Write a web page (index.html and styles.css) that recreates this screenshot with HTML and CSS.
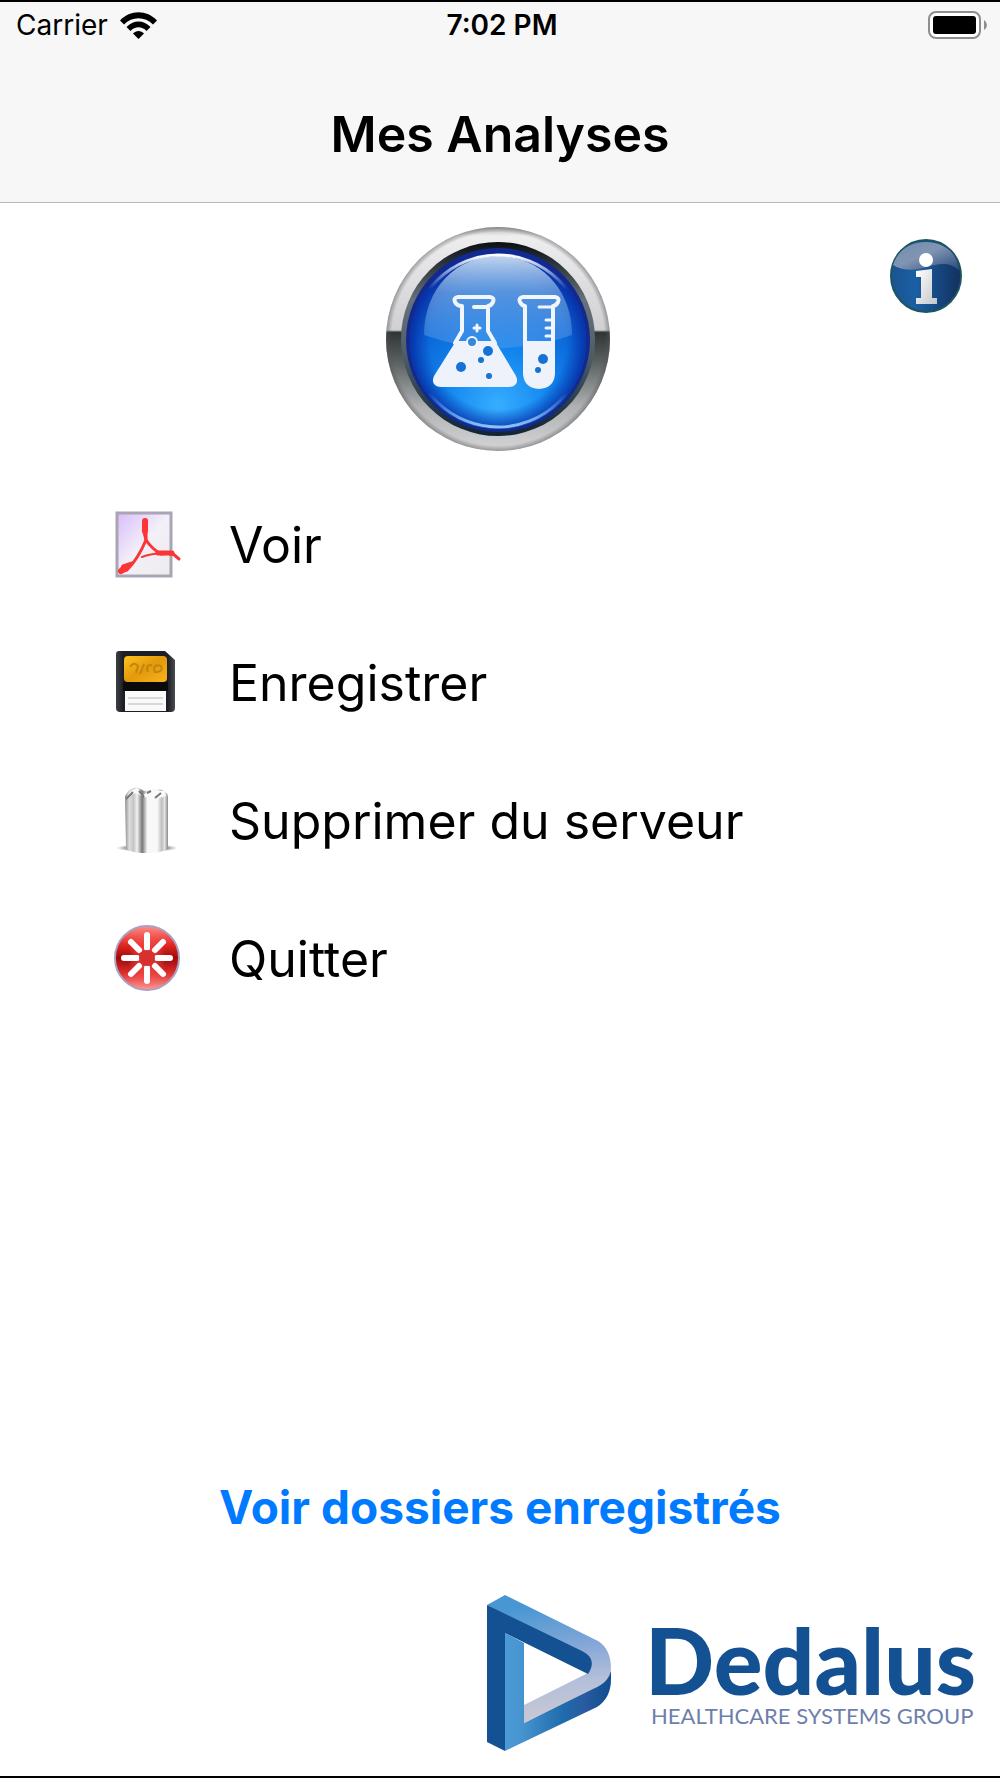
FILE: index.html
```html
<!DOCTYPE html>
<html lang="fr">
<head>
    <meta charset="UTF-8">
    <title>Mes Analyses</title>
    <meta name="viewport" content="width=device-width, initial-scale=1.0">
    <link rel="stylesheet" href="styles.css">
</head>
<body>

    <header class="header">
        <div class="status-bar">
            <div class="carrier">
                <span>Carrier</span>
                <svg class="wifi" viewBox="0 0 37 27" aria-hidden="true">
                    <path d="M0 8.5 C10 -2.5 27 -2.5 37 8.5 L33 12.5 C25 4 12 4 4 12.5 Z"/>
                    <path d="M6.5 15 C13 7.5 24 7.5 30.5 15 L26.5 19 C22 14 15 14 10.5 19 Z"/>
                    <path d="M13 21.5 C16 18 21 18 24 21.5 L18.5 27 Z"/>
                </svg>
            </div>
            <span class="time">7:02 PM</span>
            <svg class="battery" viewBox="0 0 60 28" aria-hidden="true">
                <rect x="1" y="1" width="51" height="26" rx="7" fill="#fff" stroke="#8e8e8e" stroke-width="2"/>
                <rect x="5" y="5" width="43" height="18" rx="3" fill="#000"/>
                <path d="M56 9 Q59 11 59 14 Q59 17 56 19 Z" fill="#8e8e8e"/>
            </svg>
        </div>
        <h1>Mes Analyses</h1>
    </header>

    <main class="content">
        <div class="hero">
            <svg class="lab-logo" viewBox="0 0 225 225" role="img" aria-label="Analyses">
                <defs>
                    <linearGradient id="ring" x1="0" y1="0" x2="0" y2="1">
                        <stop offset="0" stop-color="#b5b6b8"/>
                        <stop offset=".04" stop-color="#eeeeef"/>
                        <stop offset=".2" stop-color="#e2e2e5"/>
                        <stop offset=".46" stop-color="#d0d0d3"/>
                        <stop offset=".47" stop-color="#303435"/>
                        <stop offset=".6" stop-color="#596060"/>
                        <stop offset=".8" stop-color="#aeb0b2"/>
                        <stop offset="1" stop-color="#d5d5d8"/>
                    </linearGradient>
                    <linearGradient id="edge" x1="0" y1="0" x2="0" y2="1">
                        <stop offset="0" stop-color="#0a0f14"/>
                        <stop offset=".3" stop-color="#68737a"/>
                        <stop offset=".6" stop-color="#4a5c68"/>
                        <stop offset="1" stop-color="#102332"/>
                    </linearGradient>
                    <radialGradient id="ring-side" cx=".5" cy=".5" r=".5">
                        <stop offset=".95" stop-color="#555" stop-opacity="0"/>
                        <stop offset="1" stop-color="#555" stop-opacity=".5"/>
                    </radialGradient>
                    <radialGradient id="disc" cx=".5" cy=".86" r=".88">
                        <stop offset="0" stop-color="#36aeff"/>
                        <stop offset=".35" stop-color="#1285ee"/>
                        <stop offset=".65" stop-color="#0a64d6"/>
                        <stop offset="1" stop-color="#0c3fb0"/>
                    </radialGradient>
                    <radialGradient id="shade" cx=".5" cy=".5" r=".5">
                        <stop offset=".78" stop-color="#0630a8" stop-opacity="0"/>
                        <stop offset="1" stop-color="#0628a0" stop-opacity=".8"/>
                    </radialGradient>
                    <linearGradient id="gloss" x1="0" y1="0" x2="0" y2="1">
                        <stop offset="0" stop-color="#d5e8f7" stop-opacity=".9"/>
                        <stop offset=".4" stop-color="#94c0ec" stop-opacity=".55"/>
                        <stop offset="1" stop-color="#70aef0" stop-opacity=".3"/>
                    </linearGradient>
                    <linearGradient id="rim" x1="0" y1="0" x2="0" y2="1">
                        <stop offset="0" stop-color="#fff"/>
                        <stop offset=".2" stop-color="#fff" stop-opacity="0"/>
                        <stop offset=".8" stop-color="#9cd0ff" stop-opacity="0"/>
                        <stop offset="1" stop-color="#8cc4fa"/>
                    </linearGradient>
                </defs>
                <circle cx="112" cy="112" r="112" fill="url(#ring)"/>
                <circle cx="112" cy="112" r="112" fill="url(#ring-side)"/>
                <circle cx="112" cy="112" r="97" fill="url(#edge)"/>
                <circle cx="112" cy="113" r="92" fill="#12298f"/>
                <circle cx="112" cy="114" r="88" fill="url(#disc)"/>
                <circle cx="112" cy="114" r="88" fill="url(#shade)"/>
                <path d="M38 108 C38 62 70 29 112 29 C154 29 186 62 186 108 Q150 121 112 121 Q74 121 38 108 Z" fill="url(#gloss)"/>
                <circle cx="112" cy="114" r="86" fill="none" stroke="url(#rim)" stroke-width="3"/>

                <g fill="none" stroke="#f1f5fc" stroke-width="4" stroke-linecap="round" stroke-linejoin="round">
                    <path d="M72 70 H104 Q109 71 107 75 Q105 79 102 79 V104 L109 116 M72 70 Q67 71 69 75 Q71 79 76 79 V104 L69 116"/>
                    <path d="M88 80 H100"/>
                    <path d="M137 70 H169 Q174 71 172 75 Q170 79 167 79 V115 M137 70 Q132 71 134 75 Q136 79 139 79 V115"/>
                    <path d="M153 80 H166 M160 93 H166 M160 101 H166 M160 109 H166" stroke-width="3"/>
                    <path d="M91 98 V104 M88 101 H94" stroke-width="3"/>
                </g>
                <path d="M70 114 H109 L130 149 Q134 159 123 160 H55 Q44 159 48 149 Z" fill="#eef2fa"/>
                <path d="M137 114 H169 V147 Q168 161 153 162 Q138 161 137 147 Z" fill="#eef2fa"/>
                <circle cx="86" cy="115" r="5" fill="#3b86dd" stroke="#f1f5fc" stroke-width="2"/>
                <g fill="#1673d4">
                    <circle cx="102" cy="124" r="5"/>
                    <circle cx="95" cy="133" r="3"/>
                    <circle cx="75" cy="140" r="5"/>
                    <circle cx="103" cy="149" r="3"/>
                    <circle cx="157" cy="132" r="5"/>
                    <circle cx="152" cy="143" r="3"/>
                </g>
            </svg>

            <button class="info-button" type="button" aria-label="Informations">
                <svg class="info-icon" viewBox="0 0 72 75" aria-hidden="true">
                    <defs>
                        <linearGradient id="info-bg" x1="0" y1="0" x2="1" y2="0">
                            <stop offset="0" stop-color="#195491"/>
                            <stop offset=".35" stop-color="#1a5fa4"/>
                            <stop offset="1" stop-color="#132f5e"/>
                        </linearGradient>
                        <linearGradient id="info-gloss" x1="0" y1="0" x2="1" y2="1">
                            <stop offset="0" stop-color="#6f8db0"/>
                            <stop offset=".45" stop-color="#8195b2"/>
                            <stop offset="1" stop-color="#26477a"/>
                        </linearGradient>
                        <linearGradient id="info-mark" x1="0" y1="0" x2="1" y2="1">
                            <stop offset="0" stop-color="#fff"/>
                            <stop offset="1" stop-color="#c4c5ca"/>
                        </linearGradient>
                    </defs>
                    <ellipse cx="36" cy="37" rx="35" ry="36" fill="url(#info-bg)" stroke="#1c5560" stroke-width="2"/>
                    <path d="M3 26 C8 11 20 3 36 3 C54 3 68 14 69 32 C60 22 48 25 37 28 C25 32 13 32 3 26 Z" fill="url(#info-gloss)"/>
                    <circle cx="36" cy="21" r="7" fill="#fff"/>
                    <path d="M26 32 L42 30 V59 H47 V65 H26 V59 H31 V38 H26 Z" fill="url(#info-mark)"/>
                </svg>
            </button>
        </div>

        <ul class="menu">
            <li>
                <button class="menu-item" type="button">
                    <svg class="menu-icon" viewBox="0 0 68 68" aria-hidden="true">
                        <defs>
                            <linearGradient id="paper" x1="0" y1="0" x2="1" y2="1">
                                <stop offset="0" stop-color="#d9bdfb"/>
                                <stop offset=".5" stop-color="#f3f0f8"/>
                                <stop offset="1" stop-color="#ececec"/>
                            </linearGradient>
                        </defs>
                        <rect x="3" y="2" width="54" height="63" fill="url(#paper)" stroke="#aaa5b4" stroke-width="3"/>
                        <g fill="none" stroke="#fb3535" stroke-linecap="round" stroke-linejoin="round">
                            <path d="M31 9 Q28 16 32 29 Q24 48 13 59 L6 61 L9 55 L18 52" stroke-width="3"/>
                            <path d="M32 9 V29 Q38 38 47 43 L58 42 L65 48" stroke-width="3"/>
                            <path d="M28 46 Q42 40 60 44" stroke-width="2"/>
                            <path d="M7 60 L13 56" stroke-width="6"/>
                            <path d="M31 10 V20" stroke-width="6"/>
                            <path d="M44 42 H58" stroke-width="5"/>
                        </g>
                    </svg>
                    <span>Voir</span>
                </button>
            </li>
            <li>
                <button class="menu-item" type="button">
                    <svg class="menu-icon" viewBox="0 0 68 68" aria-hidden="true">
                        <defs>
                            <linearGradient id="label" x1="0" y1="0" x2="1" y2="1">
                                <stop offset="0" stop-color="#ffc21c"/>
                                <stop offset=".5" stop-color="#e29a0c"/>
                                <stop offset="1" stop-color="#f9b31b"/>
                            </linearGradient>
                            <linearGradient id="floppy" x1="0" y1="0" x2="1" y2="0">
                                <stop offset="0" stop-color="#3e4045"/>
                                <stop offset=".12" stop-color="#1d1f26"/>
                                <stop offset=".88" stop-color="#1d1f26"/>
                                <stop offset="1" stop-color="#4c4d51"/>
                            </linearGradient>
                        </defs>
                        <path d="M5 2 H51 L61 11 V59 Q61 63 57 63 H6 Q2 63 2 59 V5 Q2 2 5 2 Z" fill="url(#floppy)"/>
                        <rect x="10" y="7" width="43" height="26" rx="4" fill="url(#label)"/>
                        <path d="M16 18 Q20 12 24 17 L22 24 M30 15 L26 25 M34 23 Q31 15 38 16 M41 24 Q38 14 47 17 Q50 23 41 23" fill="none" stroke="#c48410" stroke-width="2"/>
                        <rect x="9" y="33" width="45" height="9" fill="#0a0a0c"/>
                        <rect x="11" y="42" width="41" height="20" fill="#fafafa"/>
                        <path d="M14 49 H49 M14 55 H49" stroke="#d8d8da" stroke-width="2"/>
                    </svg>
                    <span>Enregistrer</span>
                </button>
            </li>
            <li>
                <button class="menu-item" type="button">
                    <svg class="menu-icon" viewBox="0 0 68 68" aria-hidden="true">
                        <defs>
                            <linearGradient id="can" x1="0" y1="0" x2="1" y2="0">
                                <stop offset="0" stop-color="#8d8d8d"/>
                                <stop offset=".1" stop-color="#dedede"/>
                                <stop offset=".2" stop-color="#c4c4c4"/>
                                <stop offset=".28" stop-color="#f2f2f2"/>
                                <stop offset=".4" stop-color="#777"/>
                                <stop offset=".52" stop-color="#f8f8f8"/>
                                <stop offset=".75" stop-color="#f8f8f8"/>
                                <stop offset=".86" stop-color="#bdbdbd"/>
                                <stop offset=".92" stop-color="#e5e5e5"/>
                                <stop offset="1" stop-color="#888"/>
                            </linearGradient>
                            <radialGradient id="floor">
                                <stop offset=".6" stop-color="#777"/>
                                <stop offset="1" stop-color="#aaa" stop-opacity="0"/>
                            </radialGradient>
                        </defs>
                        <ellipse cx="33" cy="61" rx="31" ry="4" fill="url(#floor)"/>
                        <path d="M11 9 L15 3 L23 0 L30 4 L40 2 Q53 1 54 10 V60 Q51 66 33 66 Q14 66 12 60 Z" fill="url(#can)"/>
                        <path d="M13 9 L18 3 L24 1 L29 8 L36 4 L51 4 L52 9 L42 12 L30 10 L22 6 Z" fill="#fafafa"/>
                        <path d="M12 12 L19 5 M25 4 L30 10 M33 6 L37 4 M41 11 L47 6" stroke="#777" stroke-width="2"/>
                    </svg>
                    <span>Supprimer du serveur</span>
                </button>
            </li>
            <li>
                <button class="menu-item" type="button">
                    <svg class="menu-icon" viewBox="0 0 68 68" aria-hidden="true">
                        <defs>
                            <linearGradient id="quit" x1="0" y1="0" x2="0" y2="1">
                                <stop offset="0" stop-color="#ff8d87"/>
                                <stop offset=".3" stop-color="#e32622"/>
                                <stop offset=".5" stop-color="#9d0808"/>
                                <stop offset=".75" stop-color="#e03330"/>
                                <stop offset="1" stop-color="#ff9d98"/>
                            </linearGradient>
                            <radialGradient id="quit-shine" cx=".5" cy=".5" r=".5">
                                <stop offset="0" stop-color="#f23a37"/>
                                <stop offset="1" stop-color="#ff6a66" stop-opacity="0"/>
                            </radialGradient>
                        </defs>
                        <circle cx="33" cy="33" r="32" fill="url(#quit)" stroke="#a9a0c4" stroke-width="2"/>
                        <ellipse cx="33" cy="33" rx="19" ry="31" fill="url(#quit-shine)"/>
                        <path d="M33 10 V23 M33 43 V56 M10 33 H23 M43 33 H56 M17 17 L25 25 M49 17 L41 25 M17 49 L25 41 M49 49 L41 41" stroke="#fff" stroke-width="6" stroke-linecap="round"/>
                        <circle cx="33" cy="33" r="8" fill="#d8302e"/>
                    </svg>
                    <span>Quitter</span>
                </button>
            </li>
        </ul>
    </main>

    <footer class="footer">
        <a class="saved-link" href="#dossiers">Voir dossiers enregistrés</a>
        <div class="brand">
            <svg class="brand-mark" viewBox="0 0 124 156" aria-hidden="true">
                <defs>
                    <linearGradient id="band" gradientUnits="userSpaceOnUse" x1="50" y1="10" x2="65" y2="125">
                        <stop offset="0" stop-color="#4897d3"/>
                        <stop offset=".4" stop-color="#86a7d7"/>
                        <stop offset=".7" stop-color="#b4bfda"/>
                        <stop offset="1" stop-color="#c9c9d3"/>
                    </linearGradient>
                    <linearGradient id="base" gradientUnits="userSpaceOnUse" x1="18" y1="0" x2="124" y2="0">
                        <stop offset="0" stop-color="#4c9bd6"/>
                        <stop offset=".15" stop-color="#4795d0"/>
                        <stop offset=".55" stop-color="#1f6bac"/>
                        <stop offset=".75" stop-color="#285b9f"/>
                        <stop offset="1" stop-color="#0f4d8e"/>
                    </linearGradient>
                </defs>
                <path d="M18 38 L37 48 V128 L104 94 Q120 86 124 76 V84 Q124 103 110 112 L18 156 Z" fill="url(#base)"/>
                <path d="M0 10 L18 0 L111 46 Q124 54 124 74 Q123 87 106 94 L37 128 V110 L101 78 L94 62 Z" fill="url(#band)"/>
                <path d="M0 10 L95 56 Q111 64 101 79 L18 38 V156 L0 147 Z" fill="#145192"/>
            </svg>
            <div class="brand-text">
                <span class="brand-name">Dedalus</span>
                <span class="brand-tagline">HEALTHCARE SYSTEMS GROUP</span>
            </div>
        </div>
    </footer>

</body>
</html>
```
FILE: styles.css
```css
* {
    margin: 0;
    padding: 0;
    box-sizing: border-box;
}

body {
    display: flex;
    flex-direction: column;
    min-height: 100vh;
    font-family: Inter, "Liberation Sans", sans-serif;
    background-color: #fff;
    color: #000;
    border-top: 2px solid #000;
    border-bottom: 2px solid #000;
}

button {
    border: none;
    background: none;
    font: inherit;
    color: inherit;
    cursor: pointer;
}

svg {
    display: block;
    flex-shrink: 0;
}

/* Barre d'état et titre */
.header {
    background-color: #f7f7f7;
    border-bottom: 1px solid #b8b8b8;
    padding-bottom: 36px;
}

.status-bar {
    display: grid;
    grid-template-columns: 1fr auto 1fr;
    align-items: center;
    height: 46px;
    padding: 0 12px 0 16px;
    font-size: 28px;
}

.carrier {
    display: flex;
    align-items: center;
    gap: 12px;
}

.wifi {
    width: 37px;
    height: 27px;
}

.time {
    font-weight: 600;
}

.battery {
    width: 60px;
    height: 28px;
    justify-self: end;
}

h1 {
    margin-top: 54px;
    font-size: 50px;
    font-weight: 600;
    line-height: 64px;
    text-align: center;
}

/* Logo et bouton d'information */
.hero {
    display: grid;
    grid-template-columns: 1fr auto 1fr;
    align-items: start;
    padding: 24px 38px 0 34px;
}

.lab-logo {
    grid-column: 2;
    width: 225px;
    height: 225px;
}

.info-button {
    justify-self: end;
    margin-top: 12px;
}

.info-icon {
    width: 72px;
    height: 75px;
}

/* Menu */
.menu {
    list-style: none;
    margin-top: 24px;
    padding: 0 114px;
}

.menu-item {
    display: flex;
    align-items: center;
    gap: 47px;
    width: 100%;
    height: 138px;
    font-size: 50px;
    text-align: left;
}

.menu-icon {
    width: 68px;
    height: 68px;
}

/* Pied de page */
.footer {
    margin-top: auto;
    padding: 0 24px 25px;
}

.saved-link {
    display: block;
    font-size: 46px;
    font-weight: 700;
    line-height: 56px;
    text-align: center;
    color: #007aff;
    text-decoration: none;
}

.brand {
    display: flex;
    justify-content: flex-end;
    gap: 34px;
    margin-top: 60px;
}

.brand-mark {
    width: 124px;
    height: 156px;
}

.brand-text {
    display: flex;
    flex-direction: column;
    padding-top: 20px;
    font-family: Lato, "Liberation Sans", sans-serif;
    color: #145192;
    white-space: nowrap;
}

.brand-name {
    font-size: 91px;
    font-weight: 900;
    line-height: 90px;
}

.brand-tagline {
    padding-left: 6px;
    font-size: 22px;
    line-height: 22px;
    color: #6d7fab;
}
```
